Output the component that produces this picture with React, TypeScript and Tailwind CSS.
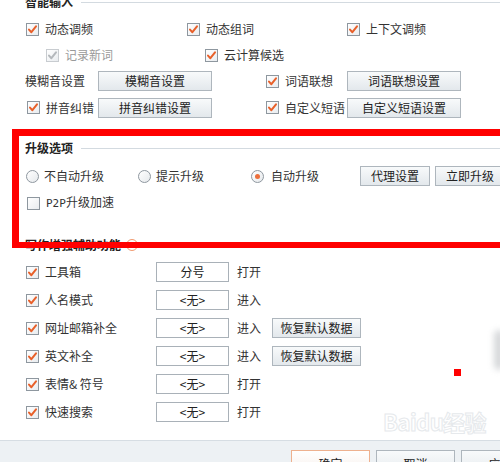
import React from 'react';

const font = { fontFamily: '"Noto Sans CJK SC", "Noto Sans", sans-serif' };

const Check = ({ checked = true, disabled = false }: { checked?: boolean; disabled?: boolean }) => (
    <span
        className={`inline-flex w-[13px] h-[13px] shrink-0 items-center justify-center border bg-gradient-to-br from-white to-[#e9ecef] ${disabled ? 'border-[#c8ccd0]' : 'border-[#8e979f]'}`}
    >
        {checked && (
            <svg width="11" height="11" viewBox="0 0 11 11">
                <path
                    d="M2 5.6 L4.4 8.2 L9 2.4"
                    fill="none"
                    stroke={disabled ? '#b4b8bc' : '#e8602a'}
                    strokeWidth="2"
                    strokeLinecap="round"
                    strokeLinejoin="round"
                />
            </svg>
        )}
    </span>
);

const Radio = ({ checked = false }: { checked?: boolean }) => (
    <span className="inline-flex w-[13px] h-[13px] shrink-0 items-center justify-center rounded-full border border-[#8e979f] bg-gradient-to-br from-white to-[#e6e9ec]">
        {checked && <span className="w-[5px] h-[5px] rounded-full bg-[#ec6f3c]" />}
    </span>
);

const Btn = ({ label, className = '' }: { label: string; className?: string }) => (
    <div
        className={`flex shrink-0 items-center justify-center h-[20px] border border-[#aeb6bd] bg-gradient-to-b from-[#f8fafb] to-[#e3e8ec] text-[12px] text-[#222] ${className}`}
    >
        {label}
    </div>
);

const Item = ({ label, w, disabled, checked = true }: { label: string; w: string; disabled?: boolean; checked?: boolean }) => (
    <div className={`flex shrink-0 items-center gap-[6px] ${w}`}>
        <Check checked={checked} disabled={disabled} />
        <span className={disabled ? 'text-[#9a9a9a]' : 'text-[#333]'}>{label}</span>
    </div>
);

const Heading = ({ label, icon, className = '' }: { label: string; icon?: boolean; className?: string }) => (
    <div className={`flex items-center h-[20px] pl-[25px] ${className}`}>
        <span className="font-bold text-[#222]">{label}</span>
        {icon && (
            <span className="ml-[5px] flex w-[12px] h-[12px] items-center justify-center rounded-full border border-[#f09a70] text-[8px] text-[#f09a70] leading-none">
                ?
            </span>
        )}
        <div className="flex-1 ml-[8px] h-px bg-[#d3dae0]" />
    </div>
);

const assists = [
    { label: '工具箱', key: '分号', action: '打开', restore: false },
    { label: '人名模式', key: '<无>', action: '进入', restore: false },
    { label: '网址邮箱补全', key: '<无>', action: '进入', restore: true },
    { label: '英文补全', key: '<无>', action: '进入', restore: true },
    { label: '表情& 符号', key: '<无>', action: '打开', restore: false },
    { label: '快速搜索', key: '<无>', action: '打开', restore: false },
];

export default function App() {
    return (
        <div className="relative w-[500px] h-[462px] overflow-hidden bg-white text-[12px] text-[#333]" style={font}>
            {/* 智能输入 */}
            <Heading label="智能输入" className="-mt-[8px]" />
            <div className="mt-[4px]">
                <div className="flex items-center h-[26px] pl-[26px]">
                    <Item label="动态调频" w="w-[161px]" />
                    <Item label="动态组词" w="w-[160px]" />
                    <Item label="上下文调频" w="" />
                </div>
                <div className="flex items-center h-[26px] pl-[46px]">
                    <Item label="记录新词" w="w-[159px]" disabled />
                    <Item label="云计算候选" w="" />
                </div>
                <div className="flex items-center h-[26px] pl-[25px]">
                    <span className="w-[73px] shrink-0">模糊音设置</span>
                    <Btn label="模糊音设置" className="w-[114px]" />
                    <div className="ml-[54px] flex items-center">
                        <Item label="词语联想" w="w-[81px]" />
                        <Btn label="词语联想设置" className="w-[114px]" />
                    </div>
                </div>
                <div className="flex items-center h-[27px] pl-[27px]">
                    <Item label="拼音纠错" w="w-[71px]" />
                    <Btn label="拼音纠错设置" className="w-[114px]" />
                    <div className="ml-[54px] flex items-center">
                        <Item label="自定义短语" w="w-[81px]" />
                        <Btn label="自定义短语设置" className="w-[114px]" />
                    </div>
                </div>
            </div>

            {/* 升级选项 */}
            <Heading label="升级选项" className="mt-[17px]" />
            <div className="flex items-center h-[26px] mt-[5px] pl-[26px]">
                <div className="flex shrink-0 items-center gap-[5px] w-[112px]"><Radio />不自动升级</div>
                <div className="flex shrink-0 items-center gap-[5px] w-[113px]"><Radio />提示升级</div>
                <div className="flex shrink-0 items-center gap-[7px] w-[109px]"><Radio checked />自动升级</div>
                <Btn label="代理设置" className="w-[70px]" />
                <Btn label="立即升级" className="w-[70px] ml-[5px]" />
            </div>
            <div className="flex items-center h-[26px] mt-[1px] pl-[27px]">
                <div className="flex items-center gap-[6px]">
                    <Check checked={false} />
                    <span>
                        <span style={{ fontFamily: '"DejaVu Sans Mono", monospace' }} className="text-[11px]">P2P</span>升级加速
                    </span>
                </div>
            </div>

            {/* 写作增强辅助功能 */}
            <Heading label="写作增强辅助功能" icon className="mt-[19px]" />
            <div className="mt-[3px]">
                {assists.map(a => (
                    <div key={a.label} className="flex items-center h-[28px] pl-[26px]">
                        <Item label={a.label} w="w-[130px]" />
                        <div className="flex shrink-0 items-center justify-center w-[73px] h-[20px] border border-[#a9b1b8] bg-white text-[#222]">
                            {a.key}
                        </div>
                        <span className="ml-[8px] w-[35px] shrink-0">{a.action}</span>
                        {a.restore && <Btn label="恢复默认数据" className="w-[89px]" />}
                    </div>
                ))}
            </div>

            {/* footer */}
            <div className="mt-[14px] h-[40px] border-t border-[#d6dde3] bg-[#edf1f4] flex items-start pt-[9px] pl-[291px] gap-[6px]">
                <Btn label="确定" className="w-[79px] h-[28px] border-[#eeb18f] from-white to-[#f6ede8]" />
                <Btn label="取消" className="w-[79px] h-[28px]" />
                <Btn label="应用" className="w-[79px] h-[28px]" />
            </div>

            {/* watermark */}
            <div className="absolute left-[383px] top-[410px] text-[22px] font-bold text-white leading-none tracking-tight" style={{ WebkitTextStroke: '1px #e6e9ec' }}>
                Baidu经验
            </div>

            {/* annotation overlays */}
            <div className="absolute left-[12px] top-[129px] w-[510px] h-[119px] border-l-[7px] border-t-[7px] border-b-[6px] border-[#ff0000] pointer-events-none" />
            <div className="absolute left-[454px] top-[369px] w-[7px] h-[7px] bg-[#ff0000]" />
            <div className="absolute left-[494px] top-[330px] w-[10px] h-[40px] rounded-full bg-[#d6d8da] blur-[3px]" />
        </div>
    );
}
